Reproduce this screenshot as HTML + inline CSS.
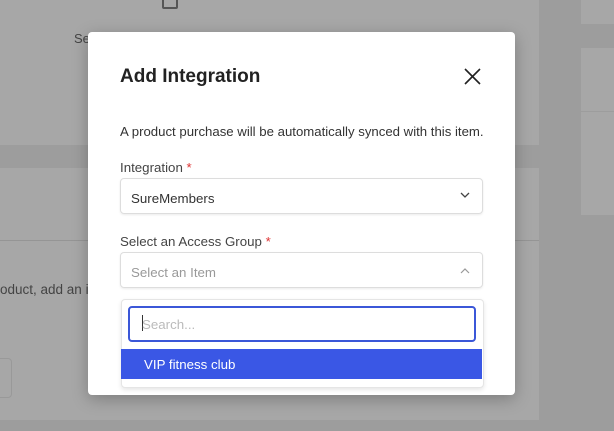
<!DOCTYPE html>
<html><head><style>
body{margin:0;width:614px;height:431px;overflow:hidden;background:#9d9d9d;font-family:"Liberation Sans","DejaVu Sans",sans-serif;position:relative}
.a{position:absolute}
</style></head><body>
<div class="a" style="left:0;top:0;width:539px;height:145px;background:#a7a7a7"></div>
<div class="a" style="left:0;top:168px;width:539px;height:72px;background:#a7a7a7"></div>
<div class="a" style="left:0;top:240px;width:539px;height:1px;background:#959595"></div>
<div class="a" style="left:0;top:241px;width:539px;height:179px;background:#a7a7a7"></div>
<div class="a" style="left:581px;top:0;width:33px;height:24px;background:#a7a7a7"></div>
<div class="a" style="left:581px;top:48px;width:33px;height:63px;background:#a7a7a7"></div>
<div class="a" style="left:581px;top:112px;width:33px;height:103px;background:#a7a7a7"></div>
<div class="a" style="left:162px;top:-6px;width:12px;height:11px;border:2px solid #555;border-radius:2px"></div>
<div class="a" style="left:74px;top:31px;font-size:13px;color:#444">Se</div>
<div class="a" style="left:0;top:282px;font-size:13.5px;color:#444">oduct, add an in</div>
<div class="a" style="left:-10px;top:358px;width:20px;height:38px;border:1px solid #999;border-radius:4px"></div>
<div class="a" style="left:88px;top:32px;width:427px;height:363px;background:#fff;border-radius:4px;box-shadow:0 4px 16px rgba(0,0,0,.25)"></div>
<div class="a" style="left:120px;top:66px;font-size:19px;font-weight:bold;color:#222">Add Integration</div>
<svg class="a" style="left:464px;top:68px" width="17" height="17"><path d="M1 1L16 16M16 1L1 16" stroke="#222" stroke-width="1.6"/></svg>
<div class="a" style="left:120px;top:124px;font-size:13.2px;color:#333;white-space:nowrap">A product purchase will be automatically synced with this item.</div>
<div class="a" style="left:120px;top:160px;font-size:13.3px;color:#444">Integration <span style="color:#d33">*</span></div>
<div class="a" style="left:120px;top:178px;width:361px;height:34px;border:1px solid #ddd;border-radius:4px;box-shadow:0 1px 2px rgba(0,0,0,.08)"></div>
<div class="a" style="left:131px;top:191px;font-size:13.3px;color:#333">SureMembers</div>
<svg class="a" style="left:460px;top:192px" width="10" height="7"><path d="M1 1L5 5L9 1" stroke="#444" stroke-width="1.3" fill="none"/></svg>
<div class="a" style="left:120px;top:234px;font-size:13.3px;color:#444">Select an Access Group <span style="color:#d33">*</span></div>
<div class="a" style="left:120px;top:252px;width:361px;height:34px;border:1px solid #ddd;border-radius:4px;box-shadow:0 1px 2px rgba(0,0,0,.08)"></div>
<div class="a" style="left:131px;top:265px;font-size:13.3px;color:#999">Select an Item</div>
<svg class="a" style="left:460px;top:268px" width="10" height="6"><path d="M1 5L5 1L9 5" stroke="#999" stroke-width="1.2" fill="none"/></svg>
<div class="a" style="left:121px;top:299px;width:361px;height:87px;background:#fff;border:1px solid #e5e5e5;border-radius:4px;box-shadow:0 2px 5px rgba(0,0,0,.1)"></div>
<div class="a" style="left:128px;top:306px;width:344px;height:32px;border:2px solid #3b57d8;border-radius:4px"></div>
<div class="a" style="left:142px;top:315px;width:1px;height:16px;background:#333"></div>
<div class="a" style="left:142px;top:317px;font-size:13.3px;color:#bbb">Search...</div>
<div class="a" style="left:121px;top:349px;width:361px;height:30px;background:#3a57e5"></div>
<div class="a" style="left:144px;top:357px;font-size:13.3px;color:#fff">VIP fitness club</div>
</body></html>
